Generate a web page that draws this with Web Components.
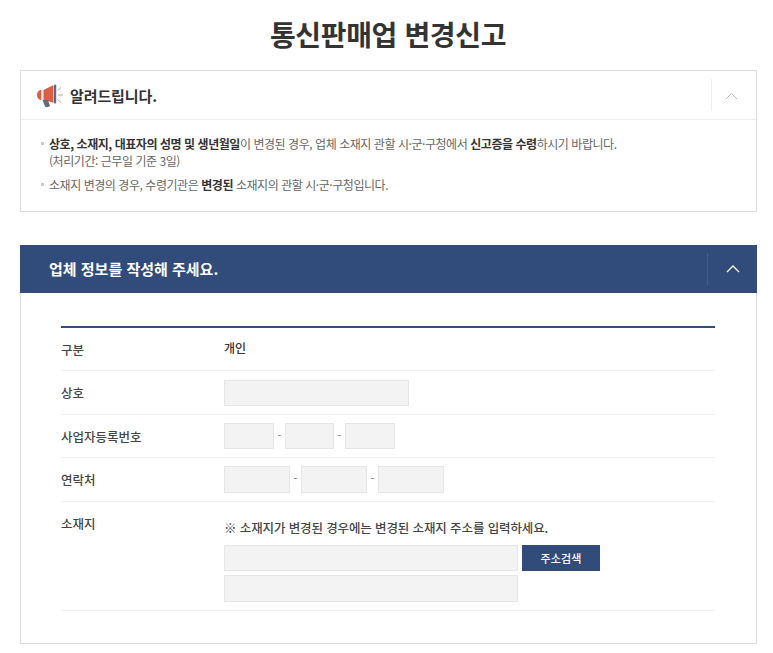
<!DOCTYPE html>
<html lang="ko"><head><meta charset="utf-8"><title>통신판매업 변경신고</title>
<style>
html,body{margin:0;background:#fff}
body{font-family:"Noto Sans CJK KR","Noto Sans",sans-serif;color:#333;width:773px;height:653px;overflow:hidden}
</style></head><body>
<report-page></report-page>
<template id="t-page"><style>
:host{display:block;padding:0 16px 0 20px}
h1{margin:0;height:70px;font-size:28px;font-weight:700;line-height:68px;text-align:center;color:#333;letter-spacing:-.35px;padding-right:1px;box-sizing:border-box}
notice-box{margin-bottom:33px}
</style>
<h1>통신판매업 변경신고</h1>
<notice-box></notice-box>
<form-panel></form-panel>
</template>

<template id="t-notice"><style>
:host{display:block;border:1px solid #ddd;box-sizing:border-box;height:142px}
.head{height:48px;border-bottom:1px solid #eee;display:flex;align-items:center;padding-left:16px}
svg.ic{width:27px;height:26px;margin-right:6px;flex:none}
h2{margin:0;font-size:15px;font-weight:700;color:#333;flex:1;letter-spacing:-.1px}
.tog{width:45px;height:32px;border-left:1px solid #eee;display:flex;align-items:center;justify-content:center;flex:none;box-sizing:border-box;padding-right:5px;padding-top:2px}
ul{list-style:none;margin:0;padding:15px 0 0 28px;font-size:12px;line-height:17px;color:#666;letter-spacing:-.45px}
li{position:relative;margin-bottom:7px}
li::before{content:"";position:absolute;left:-8px;top:7px;width:3px;height:3px;background:#ccc}
b{font-weight:700;color:#333}
</style>
<div class="head">
<svg class="ic" viewBox="0 0 27 26"><path d="M3.500 8 L4.500 8 L4.500 18 L3.500 18 Q0 17 0 13 Q0 9 3.500 8Z" fill="#d85f45"/><rect x="4.500" y="8" width="2" height="10" fill="#f6ece8"/><path d="M6.500 8 L15.500 3.500 L16.500 3.500 L16.500 20.500 L15.500 20.500 L6.500 18Z" fill="#d85f45"/><rect x="17" y="2.500" width="2.200" height="19" rx="1" fill="#5f6a80"/><path d="M5.500 18 L11 18 L13 24 Q10.500 26 8 24.500Z" fill="#5f6a80"/><path d="M21 13h5M20.500 8.500l3.500-3M20.500 17.500l3.500 3" stroke="#999" stroke-width=".8" fill="none"/></svg>
<h2>알려드립니다.</h2>
<div class="tog"><svg width="13" height="8" viewBox="0 0 13 8"><path d="M1 7 L6.500 1.500 L12 7" fill="none" stroke="#bbb" stroke-width="1"/></svg></div>
</div>
<ul>
<li><b>상호, 소재지, 대표자의 성명 및 생년월일</b>이 변경된 경우, 업체 소재지 관할 시·군·구청에서 <b>신고증을 수령</b>하시기 바랍니다.<br>(처리기간: 근무일 기준 3일)</li>
<li><span>소재지 변경의 경우, 수령기관은 </span><b>변경된</b> 소재지의 관할 시·군·구청입니다.</li>
</ul>
</template>

<template id="t-panel"><style>
:host{display:block;border:1px solid #ddd;border-top:0;height:399px;box-sizing:border-box}
.head{height:48px;background:#314b7a;margin:0 -1px;display:flex;align-items:center;padding-left:29px;color:#fff}
h2{margin:0;font-size:15px;font-weight:700;flex:1;letter-spacing:0;position:relative;top:-1px}
.tog{width:49px;height:32px;border-left:1px solid #455d88;display:flex;align-items:center;justify-content:center;flex:none}
.body{padding:33px 41px 0 40px}
.table{border-top:2px solid #314b7a}
.m{margin-top:1px}
</style>
<div class="head"><h2>업체 정보를 작성해 주세요.</h2><div class="tog"><svg width="14" height="8" viewBox="0 0 14 8"><path d="M1 7 L7 1 L13 7" fill="none" stroke="#fff" stroke-width="1.300"/></svg></div></div>
<div class="body"><div class="table">
<form-row label="구분" h="42"><span style="font-size:12px;font-weight:500;color:#333;position:relative;top:-2px">개인</span></form-row>
<form-row label="상호" h="43"><f-input class="m" w="185" h="26"></f-input></form-row>
<form-row label="사업자등록번호" h="42"><f-input w="50" h="26"></f-input><f-dash w="11"></f-dash><f-input w="49" h="26"></f-input><f-dash w="11"></f-dash><f-input w="50" h="26"></f-input></form-row>
<form-row label="연락처" h="43"><f-input w="66"></f-input><f-dash w="11"></f-dash><f-input w="66"></f-input><f-dash w="11"></f-dash><f-input w="66"></f-input></form-row>
<address-row></address-row>
</div></div>
</template>

<template id="t-row"><style>
:host{display:block;border-bottom:1px solid #f1f1f1}
.r{display:flex;align-items:center}
.l{width:163px;flex:none;font-size:12.500px;font-weight:500;color:#444}
.c{display:flex;align-items:center;flex:1}
</style><div class="r"><div class="l"></div><div class="c"><slot></slot></div></div></template>

<template id="t-input"><style>
:host{display:block;flex:none;height:27px;box-sizing:border-box;background:#f3f3f3;border:1px solid #e6e6e6}
</style></template>

<template id="t-dash"><style>
:host{display:block;flex:none;text-align:center;font-size:11px;color:#777;line-height:27px;position:relative;top:-1px}
</style>-</template>

<template id="t-addr"><style>
:host{display:flex;height:108px;border-bottom:1px solid #f1f1f1}
.l{width:163px;flex:none;font-size:12.500px;font-weight:500;color:#444;padding-top:13px;line-height:18px}
.c{padding-top:17px}
p{margin:0 0 8px;font-size:12.500px;font-weight:500;line-height:18px;color:#444;letter-spacing:-.12px}
.a{display:flex;margin-bottom:4px}
button{all:unset;box-sizing:border-box;width:78px;height:26px;margin-left:4px;background:#314b7a;color:#fff;font-size:11px;font-weight:500;text-align:center;line-height:24px;letter-spacing:.1px}
</style>
<div class="l">소재지</div>
<div class="c"><p>※ 소재지가 변경된 경우에는 변경된 소재지 주소를 입력하세요.</p>
<div class="a"><f-input w="294" h="26"></f-input><button type="button">주소검색</button></div>
<div class="a"><f-input w="294"></f-input></div></div>
</template>

<script>
function def(name,tid,init){customElements.define(name,class extends HTMLElement{
constructor(){super();this.attachShadow({mode:"open"}).appendChild(document.getElementById(tid).content.cloneNode(true));}
connectedCallback(){if(init)init(this);}
});}
def("report-page","t-page");
def("notice-box","t-notice");
def("form-panel","t-panel");
def("form-row","t-row",e=>{e.shadowRoot.querySelector(".l").textContent=e.getAttribute("label");e.shadowRoot.querySelector(".r").style.height=e.getAttribute("h")+"px";});
def("f-input","t-input",e=>{e.style.width=e.getAttribute("w")+"px";if(e.getAttribute("h"))e.style.height=e.getAttribute("h")+"px";});
def("f-dash","t-dash",e=>{e.style.width=e.getAttribute("w")+"px";});
def("address-row","t-addr");
</script>
</body></html>
